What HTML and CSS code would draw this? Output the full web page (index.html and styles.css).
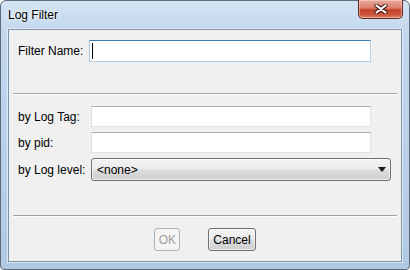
FILE: index.html
```html
<!DOCTYPE html>
<html lang="en">
<head>
<meta charset="UTF-8">
<title>Log Filter</title>
<link rel="stylesheet" href="styles.css">
</head>
<body>
<div class="window">
    <div class="titlebar">
        <span class="title">Log Filter</span>
        <div class="close">
            <svg width="14" height="10" viewBox="0 0 14 10">
                <path d="M2.5 1.5 L11.5 8.5 M11.5 1.5 L2.5 8.5" stroke="#4a1d16" stroke-width="4.2" stroke-linecap="round"/>
                <path d="M2.5 1.5 L11.5 8.5 M11.5 1.5 L2.5 8.5" stroke="#fff" stroke-width="2.2" stroke-linecap="round"/>
            </svg>
        </div>
    </div>
    <div class="client">
        <div class="row name-row">
            <label for="name">Filter Name:</label>
            <div class="field-wrap">
                <input id="name" class="field focused" type="text">
                <span class="caret"></span>
            </div>
        </div>
        <div class="separator"></div>
        <div class="filters">
            <div class="row">
                <label for="tag">by Log Tag:</label>
                <input id="tag" class="field" type="text">
            </div>
            <div class="row">
                <label for="pid">by pid:</label>
                <input id="pid" class="field" type="text">
            </div>
            <div class="row">
                <label>by Log level:</label>
                <div class="combo">
                    <span>&lt;none&gt;</span>
                    <svg width="8" height="5" viewBox="0 0 8 5"><path d="M0 0 H8 L4 5 Z" fill="#1a1a1a"/></svg>
                </div>
            </div>
        </div>
        <div class="separator sep-bottom"></div>
        <div class="buttons">
            <button class="btn ok" disabled>OK</button>
            <button class="btn">Cancel</button>
        </div>
    </div>
</div>
</body>
</html>
```

FILE: styles.css
```css
html, body{
    margin:0px;
    padding:0px;
    width:410px;
    height:270px;
    overflow:hidden;
}
body{
    font-family:"Liberation Sans", Arial, sans-serif;
    font-size:12px;
    color:#000;
    background:#fff;
}
.window{
    box-sizing:border-box;
    width:410px;
    height:270px;
    display:flex;
    flex-direction:column;
    border:1px solid #5b6b7d;
    border-radius:6px 6px 4px 4px;
    background:linear-gradient(180deg, #d3e3f3 0%, #c2d7ed 12%, #b9d0e9 60%, #b0c9e4 100%);
    padding:0px 7px 7px 7px;
}
.titlebar{
    height:28px;
    display:flex;
    align-items:flex-start;
    justify-content:space-between;
}
.title{
    margin-top:7px;
    font-size:12px;
    text-shadow:0 0 6px #fff, 0 0 3px #fff;
}
.close{
    box-sizing:border-box;
    width:45px;
    height:19px;
    margin-top:-1px;
    margin-right:-1px;
    display:flex;
    align-items:center;
    justify-content:center;
    border:1px solid #5e2a21;
    border-top:none;
    border-radius:0px 0px 5px 5px;
    background:linear-gradient(180deg, #e9a99b 0%, #dc7e6a 45%, #c3412a 55%, #cf5a3f 85%, #e08a68 100%);
    box-shadow:inset 0 0 0 1px rgba(255,230,220,.45);
}
.client{
    flex:1;
    display:flex;
    flex-direction:column;
    background:#f0f0f0;
    border:1px solid #7f93a8;
    box-shadow:0 0 0 1px rgba(255,255,255,.55);
}
.row{
    display:flex;
    align-items:center;
    padding-left:9px;
}
.row label{
    width:73px;
    flex-shrink:0;
}
.name-row{
    margin-top:10px;
}
.name-row label{
    width:71px;
}
.field-wrap{
    position:relative;
    display:flex;
}
.field{
    box-sizing:border-box;
    width:280px;
    height:21px;
    margin:0px;
    padding:0px;
    border:1px solid #e2e3ea;
    border-top-color:#abadb3;
    border-left-color:#dbdfe6;
    background:#fff;
    outline:none;
}
.focused{
    width:282px;
    height:22px;
    border-color:#b5cfe7;
    border-top-color:#3d7bad;
    border-left-color:#a4c9e3;
}
.caret{
    position:absolute;
    left:3px;
    top:3px;
    width:1px;
    height:16px;
    background:#000;
}
.separator{
    margin:31px 4px 0px 4px;
    height:0px;
    border-top:1px solid #a0a0a0;
    border-bottom:1px solid #fff;
}
.sep-bottom{
    margin-top:34px;
}
.filters{
    display:flex;
    flex-direction:column;
    gap:5px;
    margin-top:11px;
}
.combo{
    box-sizing:border-box;
    width:300px;
    height:23px;
    display:flex;
    align-items:center;
    justify-content:space-between;
    padding:0px 4px 0px 5px;
    border:1px solid #707070;
    border-radius:3px;
    background:linear-gradient(180deg, #f2f2f2 0%, #ebebeb 48%, #dddddd 52%, #cfcfcf 100%);
    box-shadow:inset 0 0 0 1px rgba(255,255,255,.6);
}
.buttons{
    display:flex;
    justify-content:center;
    gap:28px;
    margin-top:11px;
}
.btn{
    box-sizing:border-box;
    height:23px;
    padding:0px 4px;
    font-family:"Liberation Sans", Arial, sans-serif;
    font-size:12px;
    color:#000;
    border:1px solid #707070;
    border-radius:3px;
    background:linear-gradient(180deg, #f2f2f2 0%, #ebebeb 48%, #dddddd 52%, #cfcfcf 100%);
    box-shadow:inset 0 0 0 1px rgba(255,255,255,.6);
}
.ok{
    width:26px;
    padding:0px;
    color:#a0a0a0;
    border-color:#adb2b5;
    background:#f4f4f4;
    box-shadow:none;
}
```
